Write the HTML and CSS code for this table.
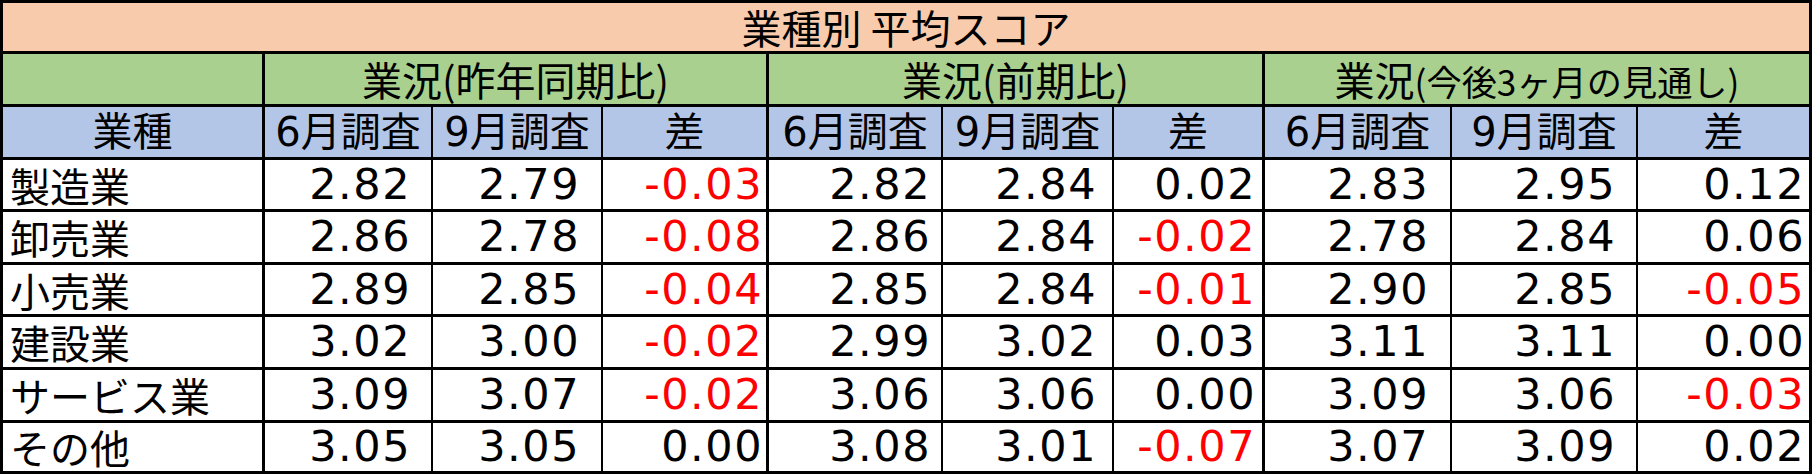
FILE: index.html
```html
<!DOCTYPE html>
<html lang="ja">
<head>
<meta charset="utf-8">
<title>業種別 平均スコア</title>
<link rel="stylesheet" href="styles.css">
</head>
<body>
<div class="sheet">
  <div class="cell title span-all end"><span>業種別 平均スコア</span></div>

  <div class="cell grp gend"></div>
  <div class="cell grp span3 gend"><span>業況(昨年同期比)</span></div>
  <div class="cell grp span3 gend"><span>業況(前期比)</span></div>
  <div class="cell grp span3 gend"><span>業況<small class="small">(今後3ヶ月の見通し)</small></span></div>

  <div class="cell sub gend">業種</div>
  <div class="cell sub">6月調査</div><div class="cell sub">9月調査</div><div class="cell sub gend">差</div>
  <div class="cell sub">6月調査</div><div class="cell sub">9月調査</div><div class="cell sub gend">差</div>
  <div class="cell sub">6月調査</div><div class="cell sub">9月調査</div><div class="cell sub gend">差</div>

  <div class="cell lbl gend">製造業</div>
  <div class="cell num k1">2.82</div><div class="cell num k2">2.79</div><div class="cell num k3 gend neg">-0.03</div>
  <div class="cell num k4">2.82</div><div class="cell num k5">2.84</div><div class="cell num k6 gend">0.02</div>
  <div class="cell num k7">2.83</div><div class="cell num k8">2.95</div><div class="cell num k9 gend">0.12</div>

  <div class="cell lbl gend">卸売業</div>
  <div class="cell num k1">2.86</div><div class="cell num k2">2.78</div><div class="cell num k3 gend neg">-0.08</div>
  <div class="cell num k4">2.86</div><div class="cell num k5">2.84</div><div class="cell num k6 gend neg">-0.02</div>
  <div class="cell num k7">2.78</div><div class="cell num k8">2.84</div><div class="cell num k9 gend">0.06</div>

  <div class="cell lbl gend">小売業</div>
  <div class="cell num k1">2.89</div><div class="cell num k2">2.85</div><div class="cell num k3 gend neg">-0.04</div>
  <div class="cell num k4">2.85</div><div class="cell num k5">2.84</div><div class="cell num k6 gend neg">-0.01</div>
  <div class="cell num k7">2.90</div><div class="cell num k8">2.85</div><div class="cell num k9 gend neg">-0.05</div>

  <div class="cell lbl gend">建設業</div>
  <div class="cell num k1">3.02</div><div class="cell num k2">3.00</div><div class="cell num k3 gend neg">-0.02</div>
  <div class="cell num k4">2.99</div><div class="cell num k5">3.02</div><div class="cell num k6 gend">0.03</div>
  <div class="cell num k7">3.11</div><div class="cell num k8">3.11</div><div class="cell num k9 gend">0.00</div>

  <div class="cell lbl gend">サービス業</div>
  <div class="cell num k1">3.09</div><div class="cell num k2">3.07</div><div class="cell num k3 gend neg">-0.02</div>
  <div class="cell num k4">3.06</div><div class="cell num k5">3.06</div><div class="cell num k6 gend">0.00</div>
  <div class="cell num k7">3.09</div><div class="cell num k8">3.06</div><div class="cell num k9 gend neg">-0.03</div>

  <div class="cell lbl gend">その他</div>
  <div class="cell num k1">3.05</div><div class="cell num k2">3.05</div><div class="cell num k3 gend">0.00</div>
  <div class="cell num k4">3.08</div><div class="cell num k5">3.01</div><div class="cell num k6 gend neg">-0.07</div>
  <div class="cell num k7">3.07</div><div class="cell num k8">3.09</div><div class="cell num k9 gend">0.02</div>
</div>
</body>
</html>
```

FILE: styles.css
```css
html, body {
  margin: 0;
  padding: 0;
  background: #ffffff;
}

.sheet {
  box-sizing: border-box;
  width: 1812px;
  height: 474px;
  display: grid;
  grid-template-columns: 262px 168px 170px 166px 174px 171px 151px 187px 186px 174px;
  grid-template-rows: 51px 53px 53px 52px 53px 52px 53px 53px 51px;
  border-top: 3px solid #000000;
  border-left: 3px solid #000000;
  font-family: "DejaVu Sans", "Noto Sans CJK JP", sans-serif;
  font-size: 40px;
  color: #000000;
}

.cell {
  box-sizing: border-box;
  display: flex;
  align-items: center;
  justify-content: center;
  min-width: 0;
  white-space: nowrap;
  line-height: 1.2;
  border-right: 2px solid #000000;
  border-bottom: 3px solid #000000;
}

.cell.gend,
.cell.end {
  border-right-width: 3px;
}

.span-all { grid-column: 1 / -1; }
.span3 { grid-column: span 3; }

.title {
  background: #f8cbad;
  font-family: "Noto Sans CJK JP", sans-serif;
}

.grp {
  background: #a9d08e;
  font-family: "Noto Sans CJK JP", sans-serif;
}

.small {
  font-size: 0.88em;
}

.sub {
  background: #b4c6e7;
}

.cell.lbl {
  justify-content: flex-start;
  padding-left: 7px;
  font-family: "Noto Sans CJK JP", sans-serif;
}

.cell.num {
  justify-content: flex-end;
  font-size: 43px;
  letter-spacing: 1.5px;
}

.cell.k1 { padding-right: 20px; }
.cell.k2 { padding-right: 21px; }
.cell.k3 { padding-right: 3px; }
.cell.k4 { padding-right: 10px; }
.cell.k5 { padding-right: 15px; }
.cell.k6 { padding-right: 6px; }
.cell.k7 { padding-right: 21px; }
.cell.k8 { padding-right: 20px; }
.cell.k9 { padding-right: 4px; }

.neg {
  color: #ff0000;
}
```
